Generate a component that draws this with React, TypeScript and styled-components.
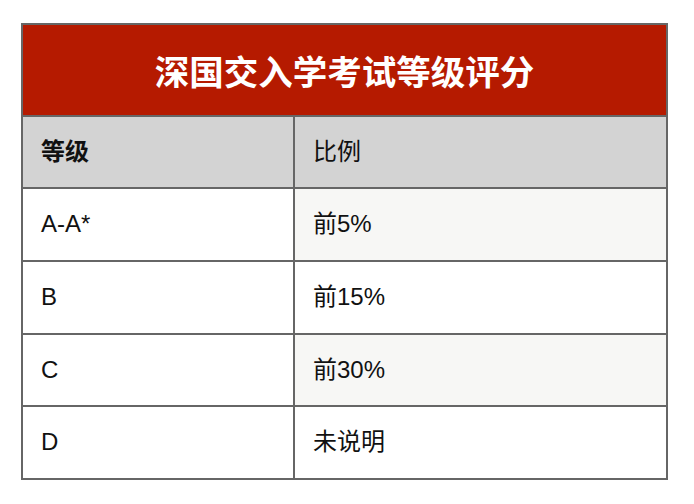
import React from "react";
import styled, { createGlobalStyle } from "styled-components";

const GlobalStyle = createGlobalStyle`
  html, body {
    margin: 0;
    padding: 0;
    background: #ffffff;
  }
  body {
    font-family: "Liberation Sans", "Noto Sans CJK SC", sans-serif;
    color: #111111;
  }
`;

const rows = [
  { grade: "A-A*", share: "前5%" },
  { grade: "B", share: "前15%" },
  { grade: "C", share: "前30%" },
  { grade: "D", share: "未说明" },
];

const App = () => {
  return (
    <>
      <GlobalStyle />
      <Page>
        <GradeTable>
          <colgroup>
            <Col $width={272} />
            <Col />
          </colgroup>
          <thead>
            <tr>
              <TitleCell colSpan={2}>深国交入学考试等级评分</TitleCell>
            </tr>
            <tr>
              <HeadCell $bold>等级</HeadCell>
              <HeadCell>比例</HeadCell>
            </tr>
          </thead>
          <tbody>
            {rows.map((row, i) => (
              <tr key={row.grade}>
                <Cell>{row.grade}</Cell>
                <Cell $striped={i % 2 === 0}>{row.share}</Cell>
              </tr>
            ))}
          </tbody>
        </GradeTable>
      </Page>
    </>
  );
};

const Page = styled.div`
  padding: 23px 0 0 21px;
`;

const GradeTable = styled.table`
  width: 647px;
  border-collapse: collapse;
  border: 2px solid #666666;
  table-layout: fixed;
`;

const Col = styled.col<{ $width?: number }>`
  width: ${(p) => (p.$width ? `${p.$width}px` : "auto")};
`;

const TitleCell = styled.th`
  background: #b51a00;
  color: #ffffff;
  font-family: "Noto Sans CJK SC", "Liberation Sans", sans-serif;
  font-size: 34.5px;
  font-weight: 700;
  line-height: 48px;
  padding: 21px 0;
  text-align: center;
  border: 2px solid #666666;
`;

const HeadCell = styled.th<{ $bold?: boolean }>`
  background: #d3d3d3;
  font-size: 24px;
  font-weight: ${(p) => (p.$bold ? 700 : 400)};
  line-height: 30px;
  padding: 20px 18px;
  text-align: left;
  border: 2px solid #666666;
`;

const Cell = styled.td<{ $striped?: boolean }>`
  background: ${(p) => (p.$striped ? "#f7f7f5" : "#ffffff")};
  font-size: 24px;
  line-height: 30.75px;
  padding: 20px 18px;
  border: 2px solid #666666;
`;

export default App;
